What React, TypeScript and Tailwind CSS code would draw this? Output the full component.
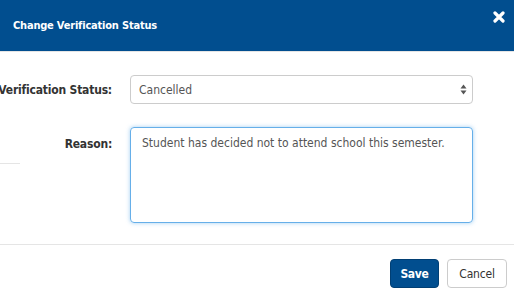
import React, { useState } from "react";

const CloseIcon = () => (
  <svg width="12" height="12" viewBox="0 0 12 12" aria-hidden="true">
    <path d="M2 2 L10 10 M10 2 L2 10" stroke="#ffffff" strokeWidth="3.2" strokeLinecap="round" />
  </svg>
);

const SelectArrows = () => (
  <svg width="7" height="11" viewBox="0 0 7 11" aria-hidden="true">
    <path d="M3.5 0.5 L6.5 4.5 H0.5 Z" fill="#555" />
    <path d="M3.5 10.5 L6.5 6.5 H0.5 Z" fill="#555" />
  </svg>
);

export default function App() {
  const [status, setStatus] = useState("Cancelled");
  const [reason, setReason] = useState(
    "Student has decided not to attend school this semester."
  );

  return (
    <div
      className="w-[514px] h-[298px] bg-white overflow-hidden text-[#333]"
      style={{ fontFamily: '"DejaVu Sans Condensed", "DejaVu Sans", sans-serif' }}
    >
      {/* header */}
      <div className="h-[52px] bg-[#014e8f] border-b border-[#e5e5e5] flex items-center justify-between pl-[13px] pr-[9px]">
        <h4 className="text-white font-bold text-[11px] tracking-[-0.2px] mt-[1px]">
          Change Verification Status
        </h4>
        <button className="self-start mt-[11px]">
          <CloseIcon />
        </button>
      </div>

      {/* body */}
      <div className="pt-[23px] pb-[21px] flex flex-col gap-[23px]">
        <div className="flex items-center">
          <div className="w-[112px] shrink-0 flex justify-end">
            <label className="font-bold text-[12px] whitespace-nowrap tracking-[-0.2px]">
              Verification Status:
            </label>
          </div>
          <div className="ml-[18px] w-[343px] h-[29px] border border-[#ccc] rounded-[4px] flex items-center justify-between pl-[8px] pr-[5px] bg-white">
            <span className="text-[12px] text-[#555]">{status}</span>
            <SelectArrows />
          </div>
        </div>

        <div className="flex items-start">
          <div className="w-[112px] shrink-0 flex flex-col items-end">
            <label className="font-bold text-[12px] whitespace-nowrap tracking-[-0.2px] mt-[8px]">
              Reason:
            </label>
            <div className="self-start mt-[10px] w-[20px] border-t border-[#e5e5e5]" />
          </div>
          <textarea
            value={reason}
            onChange={(e) => setReason(e.target.value)}
            className="ml-[18px] w-[343px] h-[96px] border border-[#66afe9] rounded-[4px] shadow-[0_0_4px_rgba(102,175,233,0.6)] px-[11px] py-[6px] text-[12px] text-[#555] resize-none outline-none"
          />
        </div>
      </div>

      {/* footer */}
      <div className="border-t border-[#e5e5e5] pt-[14px] pr-[7px] flex justify-end gap-[8px]">
        <button className="w-[49px] h-[29px] rounded-[4px] bg-[#014e8f] border border-[#013f74] text-white font-bold text-[12px] tracking-[-0.3px]">
          Save
        </button>
        <button
          onClick={() => setStatus("Cancelled")}
          className="w-[60px] h-[29px] rounded-[4px] bg-white border border-[#ccc] text-[#333] text-[12px] tracking-[-0.2px]"
        >
          Cancel
        </button>
      </div>
    </div>
  );
}
